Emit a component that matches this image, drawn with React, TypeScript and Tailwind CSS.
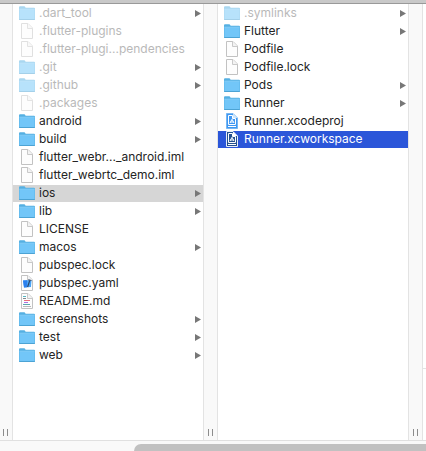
type Kind = "folder" | "file" | "code" | "markdown" | "xcode";

interface Entry {
  name: string;
  kind: Kind;
  hidden?: boolean;
  state?: "open" | "active";
}

const PROJECT: Entry[] = [
  { name: ".dart_tool", kind: "folder", hidden: true },
  { name: ".flutter-plugins", kind: "file", hidden: true },
  { name: ".flutter-plugi...pendencies", kind: "file", hidden: true },
  { name: ".git", kind: "folder", hidden: true },
  { name: ".github", kind: "folder", hidden: true },
  { name: ".packages", kind: "file", hidden: true },
  { name: "android", kind: "folder" },
  { name: "build", kind: "folder" },
  { name: "flutter_webr..._android.iml", kind: "file" },
  { name: "flutter_webrtc_demo.iml", kind: "file" },
  { name: "ios", kind: "folder", state: "open" },
  { name: "lib", kind: "folder" },
  { name: "LICENSE", kind: "file" },
  { name: "macos", kind: "folder" },
  { name: "pubspec.lock", kind: "file" },
  { name: "pubspec.yaml", kind: "code" },
  { name: "README.md", kind: "markdown" },
  { name: "screenshots", kind: "folder" },
  { name: "test", kind: "folder" },
  { name: "web", kind: "folder" },
];

const IOS: Entry[] = [
  { name: ".symlinks", kind: "folder", hidden: true },
  { name: "Flutter", kind: "folder" },
  { name: "Podfile", kind: "file" },
  { name: "Podfile.lock", kind: "file" },
  { name: "Pods", kind: "folder" },
  { name: "Runner", kind: "folder" },
  { name: "Runner.xcodeproj", kind: "xcode" },
  { name: "Runner.xcworkspace", kind: "xcode", state: "active" },
];

function FolderIcon() {
  return (
    <svg viewBox="0 0 16 16" className="size-4" aria-hidden="true">
      <path d="M0 2.4Q0 1.3 1 1.3H5.2Q5.9 1.3 6.2 2L6.6 2.8H15Q16 2.8 16 3.8V14.2Q16 15 15.2 15H.8Q0 15 0 14.2Z" fill="#55b0e2" />
      <path d="M.4 4.4H15.6V14H.4Z" fill="#72c6f8" />
      <path d="M.4 4.2H15.6" stroke="#8fd4fb" strokeWidth=".8" />
      <path d="M.2 14.5H15.8" stroke="#4a9fd0" strokeWidth=".8" />
    </svg>
  );
}

function Page() {
  return (
    <>
      <path d="M2.5 .5H9L13.5 5V15.5H2.5Z" fill="#fdfdfd" stroke="#c2c2c2" />
      <path d="M8.5 .5V5.5H13.5" fill="#f3f3f3" stroke="#c9c9c9" />
    </>
  );
}

function XcodePage({ active }: { active: boolean }) {
  const ink = active ? "#24508f" : "#3f97f2";
  return (
    <>
      <path d="M2.5 .5H9L13.5 5V15.5H2.5Z" fill={ink} stroke={active ? "#e8eef8" : "#76b7f3"} />
      <path d="M9 .5V5H13.5Z" fill={active ? "#ffffff" : "#cfe6fb"} />
      <path d="M4.5 2.5H8.5V5.5H11.5V11.5H4.5Z" fill={ink} stroke="#ffffff" />
      <path d="M6 10 8 6.3 10 10M6.3 9H9.7" fill="none" stroke="#ffffff" />
      <path d="M4 13.5H12" stroke="#ffffff" />
    </>
  );
}

function FileIcon({ kind, active }: { kind: Kind; active: boolean }) {
  return (
    <svg viewBox="0 0 16 16" className="size-4" aria-hidden="true">
      {kind === "xcode" ? <XcodePage active={active} /> : <Page />}
      {kind === "code" && (
        <>
          <path d="M4 5.5 12.5 5 12 12 5 12.5Z" fill="#4aa5f7" />
          <path d="M4 5.5 8 5.3V12.3L5 12.5Z" fill="#2b80ee" />
          <path d="M11 4.8 8.6 12" stroke="#2c4770" strokeWidth="1.2" />
          <path d="M9 4.8 12.4 5.5" stroke="#4d6079" />
        </>
      )}
      {kind === "markdown" && (
        <g fill="none">
          <path d="M4 3.5H7" stroke="#55b6c2" />
          <path d="M4 5.5H7" stroke="#85898e" />
          <path d="M5 7.5H11" stroke="#e8717a" />
          <path d="M5 9.5H9" stroke="#a970e2" />
          <path d="M4 11.5H11" stroke="#5aa7ac" />
          <path d="M4 13.5H12" stroke="#b9b9b9" />
        </g>
      )}
    </svg>
  );
}

function Row({ entry }: { entry: Entry }) {
  const active = entry.state === "active";
  const background = active ? "bg-[#2b56d9] text-white" : entry.state === "open" ? "bg-[#d6d6d6] text-[#242424]" : "text-[#242424]";
  return (
    <li>
      <button type="button" className={`flex h-[17px] w-full items-start pl-1.5 pr-0.5 text-left ${background}`}>
        <span className={`flex min-w-0 flex-1 items-start gap-1 ${entry.hidden ? "opacity-50" : ""}`}>
          <span className="shrink-0">
            {entry.kind === "folder" ? <FolderIcon /> : <FileIcon kind={entry.kind} active={active} />}
          </span>
          <span className={`whitespace-nowrap ${entry.hidden ? "text-[#747474]" : ""}`}>{entry.name}</span>
        </span>
        {entry.kind === "folder" && (
          <svg viewBox="0 0 6 7" className="h-[7px] w-1.5 shrink-0 self-center" aria-hidden="true">
            <path d="M0 0 6 3.5 0 7Z" fill="#777777" />
          </svg>
        )}
      </button>
    </li>
  );
}

function Column({ label, entries }: { label: string; entries: Entry[] }) {
  return (
    <ul aria-label={label} className="flex min-w-0 flex-1 flex-col gap-px overflow-hidden bg-white pt-px">
      {entries.map((entry) => (
        <Row key={entry.name} entry={entry} />
      ))}
    </ul>
  );
}

// Strip between two columns, with the resize grip at its foot
function Divider({ first = false }: { first?: boolean }) {
  return (
    <div className={`flex shrink-0 items-end justify-end gap-[3px] border-r border-[#e3e3e3] bg-[#f9f9f9] pr-1 pb-1 ${first ? "w-[13px]" : "w-[15px] border-l"}`}>
      <span className="h-[7px] w-px bg-[#8c8c8c]" />
      <span className="h-[7px] w-px bg-[#8c8c8c]" />
    </div>
  );
}

export default function App() {
  return (
    <div className="flex h-screen flex-col overflow-hidden bg-white font-['Inter','Liberation_Sans',sans-serif] text-[12px] leading-4">
      <header className="h-1 shrink-0 border-b border-[#999999] bg-[#c9c9c9]" />
      <main className="flex min-h-0 flex-1">
        <Divider first />
        <Column label="Project" entries={PROJECT} />
        <Divider />
        <Column label="ios" entries={IOS} />
        <Divider />
        <aside className="flex w-[3px] shrink-0 flex-col bg-white">
          <div className="flex-1 border-b border-[#e3e3e3]" />
          <div className="h-[71px]" />
        </aside>
      </main>
      <footer className="flex h-[11px] shrink-0 justify-end border-t border-[#e0e0e0] bg-[#f9f9f9] pt-[3px]">
        <div className="w-[292px] rounded-tl-full bg-[#c1c1c1]" />
      </footer>
    </div>
  );
}
